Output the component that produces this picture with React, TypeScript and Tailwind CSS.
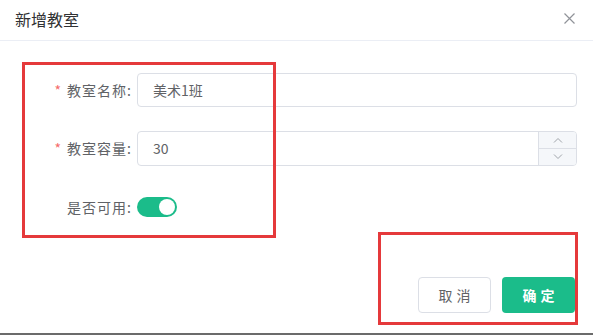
import React from 'react';

const FONT = "font-['Noto_Sans_CJK_SC','Noto_Sans',sans-serif]";

const Label: React.FC<{ text: string; required?: boolean }> = ({ text, required }) => (
  <div className="w-[137px] shrink-0 pr-[5px] flex items-center justify-end text-[14px] text-[#606266]">
    {required && <span className="text-[#f56c6c] mr-[6px]">*</span>}
    <span className="tracking-[1px]">{text}</span>
  </div>
);

const Chevron: React.FC<{ up?: boolean }> = ({ up }) => (
  <svg width="10" height="6" viewBox="0 0 10 6" fill="none" stroke="#a0a4aa" strokeWidth="1">
    {up ? <path d="M1 5.5 L5 1.5 L9 5.5" /> : <path d="M1 0.5 L5 4.5 L9 0.5" />}
  </svg>
);

export default function App() {
  return (
    <div className={`relative w-[593px] h-[335px] bg-white overflow-hidden ${FONT}`}>
      {/* Header */}
      <div className="h-[41px] border-b border-[#ebeef5] flex items-center justify-between pl-[15px] pr-[18px] pb-[3px]">
        <span className="text-[16px] text-[#303133]">新增教室</span>
        <svg width="11" height="11" viewBox="0 0 11 11" stroke="#909399" strokeWidth="1.2">
          <path d="M0.5 0.5 L10.5 10.5 M10.5 0.5 L0.5 10.5" />
        </svg>
      </div>

      {/* Form */}
      <div className="pt-[32px] pr-[16px] flex flex-col gap-[24px]">
        <div className="flex h-[34px]">
          <Label text="教室名称:" required />
          <div className="flex-1 border border-[#dcdfe6] rounded-[4px] flex items-center px-[15px] text-[14px] text-[#606266]">
            美术1班
          </div>
        </div>

        <div className="flex h-[35px]">
          <Label text="教室容量:" required />
          <div className="flex-1 border border-[#dcdfe6] rounded-[4px] flex overflow-hidden">
            <div className="flex-1 flex items-center px-[15px] text-[14px] text-[#606266]">30</div>
            <div className="w-[38px] border-l border-[#dcdfe6] bg-[#f5f7fa] flex flex-col">
              <div className="flex-1 flex items-center justify-center border-b border-[#dcdfe6]">
                <Chevron up />
              </div>
              <div className="flex-1 flex items-center justify-center">
                <Chevron />
              </div>
            </div>
          </div>
        </div>

        <div className="flex h-[34px] items-center">
          <Label text="是否可用:" />
          <div className="w-[40px] h-[20px] rounded-full bg-[#1bbc8a] flex items-center justify-end pr-[2px]">
            <div className="w-[16px] h-[16px] rounded-full bg-white" />
          </div>
        </div>
      </div>

      {/* Footer */}
      <div className="flex justify-end gap-[11px] pr-[18px] mt-[53px]">
        <button className="w-[73px] h-[36px] border border-[#dcdfe6] rounded-[4px] bg-white text-[14px] text-[#606266] tracking-[4px] pl-[4px]">
          取消
        </button>
        <button className="w-[73px] h-[36px] rounded-[4px] bg-[#1bbc8a] text-[14px] text-white font-bold tracking-[4px] pl-[4px]">
          确定
        </button>
      </div>

      {/* Annotation boxes */}
      <div className="absolute left-[22px] top-[62px] w-[254px] h-[176px] border-[3px] border-[#e5393b]" />
      <div className="absolute left-[378px] top-[232px] w-[200px] h-[93px] border-[3px] border-[#e5393b]" />
      <div className="absolute left-0 bottom-0 w-full h-[2px] bg-[#6b6b6b]" />
    </div>
  );
}
